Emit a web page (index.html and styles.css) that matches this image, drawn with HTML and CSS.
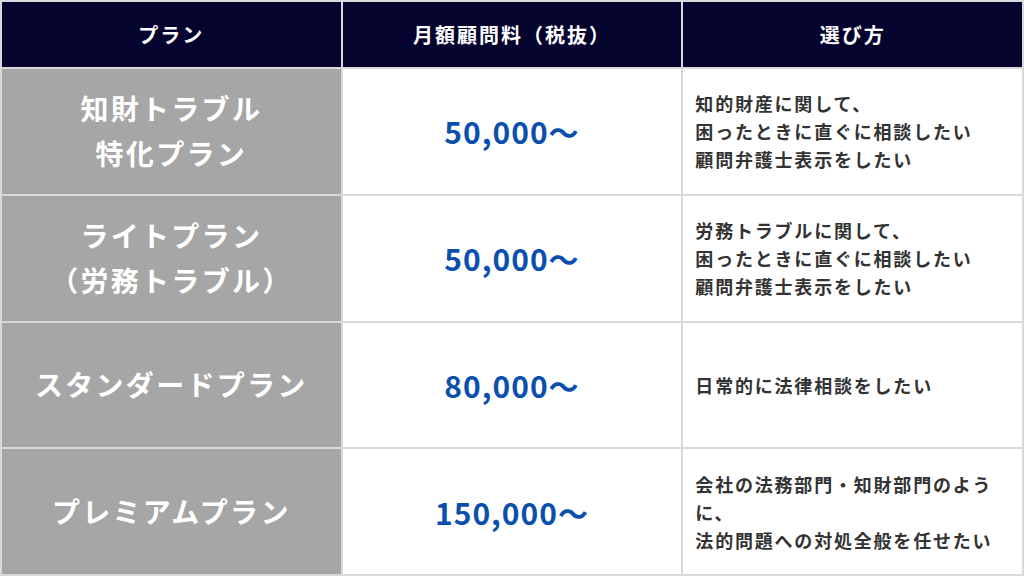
FILE: index.html
```html
<!DOCTYPE html>
<html lang="ja">
<head>
<meta charset="utf-8">
<link rel="stylesheet" href="styles.css">
</head>
<body>
<div class="table">
  <div class="cell head">プラン</div>
  <div class="cell head">月額顧問料（税抜）</div>
  <div class="cell head">選び方</div>

  <div class="cell plan">知財トラブル<br>特化プラン</div>
  <div class="cell price">50,000〜</div>
  <div class="cell desc">知的財産に関して、<br>困ったときに直ぐに相談したい<br>顧問弁護士表示をしたい</div>

  <div class="cell plan">ライトプラン<br>（労務トラブル）</div>
  <div class="cell price">50,000〜</div>
  <div class="cell desc">労務トラブルに関して、<br>困ったときに直ぐに相談したい<br>顧問弁護士表示をしたい</div>

  <div class="cell plan">スタンダードプラン</div>
  <div class="cell price">80,000〜</div>
  <div class="cell desc">日常的に法律相談をしたい</div>

  <div class="cell plan">プレミアムプラン</div>
  <div class="cell price">150,000〜</div>
  <div class="cell desc">会社の法務部門・知財部門のように、<br>法的問題への対処全般を任せたい</div>
</div>
</body>
</html>
```
FILE: styles.css
```css
* { box-sizing: border-box; }
html, body { margin: 0; padding: 0; }
body {
  width: 1024px;
  height: 576px;
  overflow: hidden;
  font-family: "Noto Sans CJK JP", "Noto Sans", sans-serif;
  font-weight: 700;
}
.table {
  display: grid;
  grid-template-columns: repeat(3, 1fr);
  grid-template-rows: 65px repeat(4, 1fr);
  gap: 2px;
  padding: 2px;
  width: 1024px;
  height: 576px;
  background: #d9d9d9;
}
.cell {
  display: flex;
  flex-direction: column;
  justify-content: center;
  background: #ffffff;
}
.head {
  background: #04042e;
  color: #ffffff;
  font-size: 20px;
  letter-spacing: 2px;
  align-items: center;
  text-align: center;
}
.plan {
  background: #a6a6a6;
  color: #ffffff;
  font-size: 28px;
  letter-spacing: 2.3px;
  line-height: 45px;
  text-align: center;
  align-items: center;
}
.price {
  color: #0b4fae;
  font-size: 30px;
  letter-spacing: 1px;
  text-align: center;
  align-items: center;
}
.desc {
  color: #333333;
  font-size: 18px;
  letter-spacing: 1.8px;
  line-height: 28px;
  padding: 0 12px;
  display: block;
  align-content: center;
}
```
